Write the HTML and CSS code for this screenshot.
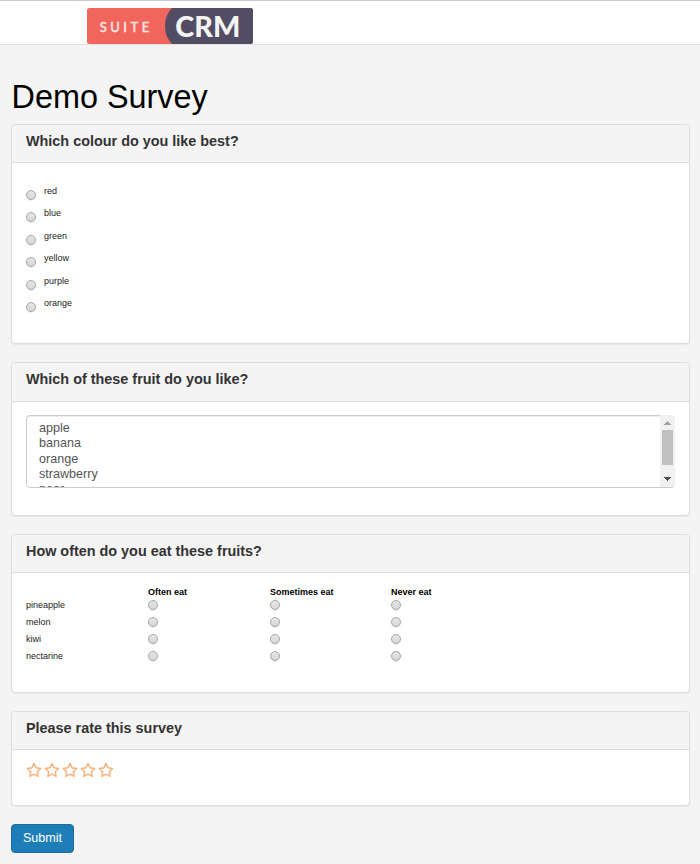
FILE: index.html
```html
<!DOCTYPE html>
<html lang="en">
<head>
<meta charset="utf-8">
<title>Demo Survey</title>
<link rel="stylesheet" href="styles.css">
</head>
<body>
<header class="topbar">
  <svg class="logo" width="166" height="36" viewBox="0 0 166 36" role="img" aria-label="Suite CRM">
    <defs><clipPath id="round"><rect width="166" height="36" rx="2.5"/></clipPath></defs>
    <g clip-path="url(#round)">
      <rect width="166" height="36" fill="#f1665c"/>
      <path d="M85 0Q78 7 78 18T85 36H166V0Z" fill="#534d64"/>
    </g>
    <text class="logo-suite" x="12.7" y="23.7" textLength="49.5">SUITE</text>
    <text class="logo-crm" x="88.3" y="28.6" textLength="65" lengthAdjust="spacingAndGlyphs">CRM</text>
  </svg>
</header>
<main class="page">
  <h1>Demo Survey</h1>
  <form>
    <section class="panel colours">
      <h2>Which colour do you like best?</h2>
      <div class="panel-body">
        <label class="choice"><input type="radio" name="colour"><span>red</span></label>
        <label class="choice"><input type="radio" name="colour"><span>blue</span></label>
        <label class="choice"><input type="radio" name="colour"><span>green</span></label>
        <label class="choice"><input type="radio" name="colour"><span>yellow</span></label>
        <label class="choice"><input type="radio" name="colour"><span>purple</span></label>
        <label class="choice"><input type="radio" name="colour"><span>orange</span></label>
      </div>
    </section>
    <section class="panel fruit">
      <h2>Which of these fruit do you like?</h2>
      <div class="panel-body">
        <div class="listbox">
          <ul class="options">
            <li>apple</li><li>banana</li><li>orange</li><li>strawberry</li><li>pear</li>
          </ul>
          <div class="scrollbar">
            <svg width="15" height="73" viewBox="0 0 15 73" shape-rendering="crispEdges">
              <path d="M4 10V9h1V8h1V7h1V6h1v1h1v1h1v1h1v1Z" fill="#a3a3a3"/>
              <rect x="2" y="15" width="11" height="35" fill="#c1c1c1"/>
              <path d="M4 62h7v1h-1v1h-1v1h-1v1h-1v-1h-1v-1h-1v-1h-1Z" fill="#505050"/>
            </svg>
          </div>
        </div>
      </div>
    </section>
    <section class="panel frequency">
      <h2>How often do you eat these fruits?</h2>
      <div class="panel-body">
        <div class="matrix head"><span></span><b>Often eat</b><b>Sometimes eat</b><b>Never eat</b></div>
        <div class="matrix"><span>pineapple</span><input type="radio" name="pineapple"><input type="radio" name="pineapple"><input type="radio" name="pineapple"></div>
        <div class="matrix"><span>melon</span><input type="radio" name="melon"><input type="radio" name="melon"><input type="radio" name="melon"></div>
        <div class="matrix"><span>kiwi</span><input type="radio" name="kiwi"><input type="radio" name="kiwi"><input type="radio" name="kiwi"></div>
        <div class="matrix"><span>nectarine</span><input type="radio" name="nectarine"><input type="radio" name="nectarine"><input type="radio" name="nectarine"></div>
      </div>
    </section>
    <section class="panel rating">
      <h2>Please rate this survey</h2>
      <div class="panel-body">
        <svg width="0" height="0" class="defs"><symbol id="star" viewBox="0 0 16 16"><path d="M8 1.6 10 5.8 14.7 6.5 11.3 9.7 12.1 14.3 8 12.1 3.9 14.3 4.7 9.7 1.3 6.5 6 5.8Z" fill="none" stroke="#f7b078" stroke-width="1.4" stroke-linejoin="round"/></symbol></svg>
        <div class="stars">
          <svg><use href="#star"/></svg><svg><use href="#star"/></svg><svg><use href="#star"/></svg><svg><use href="#star"/></svg><svg><use href="#star"/></svg>
        </div>
      </div>
    </section>
    <button class="submit" type="button">Submit</button>
  </form>
</main>
</body>
</html>
```
FILE: styles.css
```css
* { box-sizing: border-box; }
body {
  margin: 0;
  background: #f4f4f4;
  color: #000;
  font: 9px/13px "Liberation Sans", Arial, sans-serif;
}
.topbar {
  height: 45px;
  padding: 7px 0 0 87px;
  background: #fff;
  border-top: 1px solid #ccc;
  border-bottom: 1px solid #e0e0e0;
}
.logo { display: block; }
.logo-suite { font: 13px Lato, sans-serif; fill: #fbe9e8; stroke: #fbe9e8; stroke-width: .45; }
.logo-crm { font: 900 29px Lato, sans-serif; fill: #f4f4f4; }
.page { padding: 34px 10px 0 11px; }
h1 {
  margin: 0 0 9px .5px;
  font-size: 32.4px;
  line-height: 36px;
  font-weight: 400;
}
.panel {
  margin-bottom: 18px;
  background: #fff;
  border: 1px solid #ddd;
  border-radius: 4px;
  box-shadow: 0 1px 1px rgba(0, 0, 0, .05);
}
.panel h2 {
  height: 38px;
  margin: 0;
  padding: 8px 14px 0;
  background: #f4f4f4;
  border-bottom: 1px solid #ddd;
  border-radius: 3px 3px 0 0;
  color: #333;
  font-size: 14.4px;
  line-height: 16px;
}
.panel-body { padding: 0 14px; }
.colours { height: 220px; }
.fruit { height: 154px; }
.fruit h2 { height: 39px; }
.frequency { height: 159px; }
.rating { height: 95px; }
.colours .panel-body { padding-top: 22px; }
.choice { display: flex; align-items: flex-start; height: 22.4px; color: #222; }
.choice span { margin-left: 8px; }
.choice input[type="radio"] { margin-top: 5px; }
input[type="radio"] {
  appearance: none;
  flex: none;
  width: 10px;
  height: 10px;
  margin: 0;
  border: 1px solid #a5a5a5;
  border-radius: 50%;
  background: linear-gradient(#e5e5e5, #d8d8d8);
  box-shadow: 0 1px 1px rgba(0, 0, 0, .08);
}
.fruit .panel-body { padding-top: 13px; }
.listbox {
  display: flex;
  height: 73px;
  overflow: hidden;
  border-radius: 4px;
}
.options {
  flex: 1;
  margin: 0;
  padding: 5px 12px 0;
  overflow: hidden;
  list-style: none;
  border: 1px solid #ccc;
  border-right: 0;
  border-radius: 4px 0 0 4px;
  box-shadow: inset 0 1px 1px rgba(0, 0, 0, .075);
  color: #555;
  font-size: 12.6px;
  line-height: 15.3px;
}
.scrollbar { width: 15px; background: #f1f1f1; border-bottom: 1px solid #ccc; }
.scrollbar svg { display: block; }
.frequency .panel-body { padding-top: 13px; }
.matrix {
  display: grid;
  grid-template-columns: 122px 122px 121px 122px;
  align-items: start;
  height: 17px;
  line-height: 12px;
  color: #222;
}
.matrix.head { height: 14px; color: #000; }
.matrix:not(.head) span { margin-top: -1px; }
.defs { position: absolute; }
.stars { display: flex; gap: 2px; padding-top: 12px; }
.stars svg { width: 16px; height: 16px; }
.submit {
  display: block;
  width: 63px;
  height: 29px;
  padding: 0 0 2px;
  background: #1d7db7;
  border: 1px solid #1b6d9f;
  border-radius: 4px;
  color: #fff;
  font: 12.6px "Liberation Sans", Arial, sans-serif;
}
```
